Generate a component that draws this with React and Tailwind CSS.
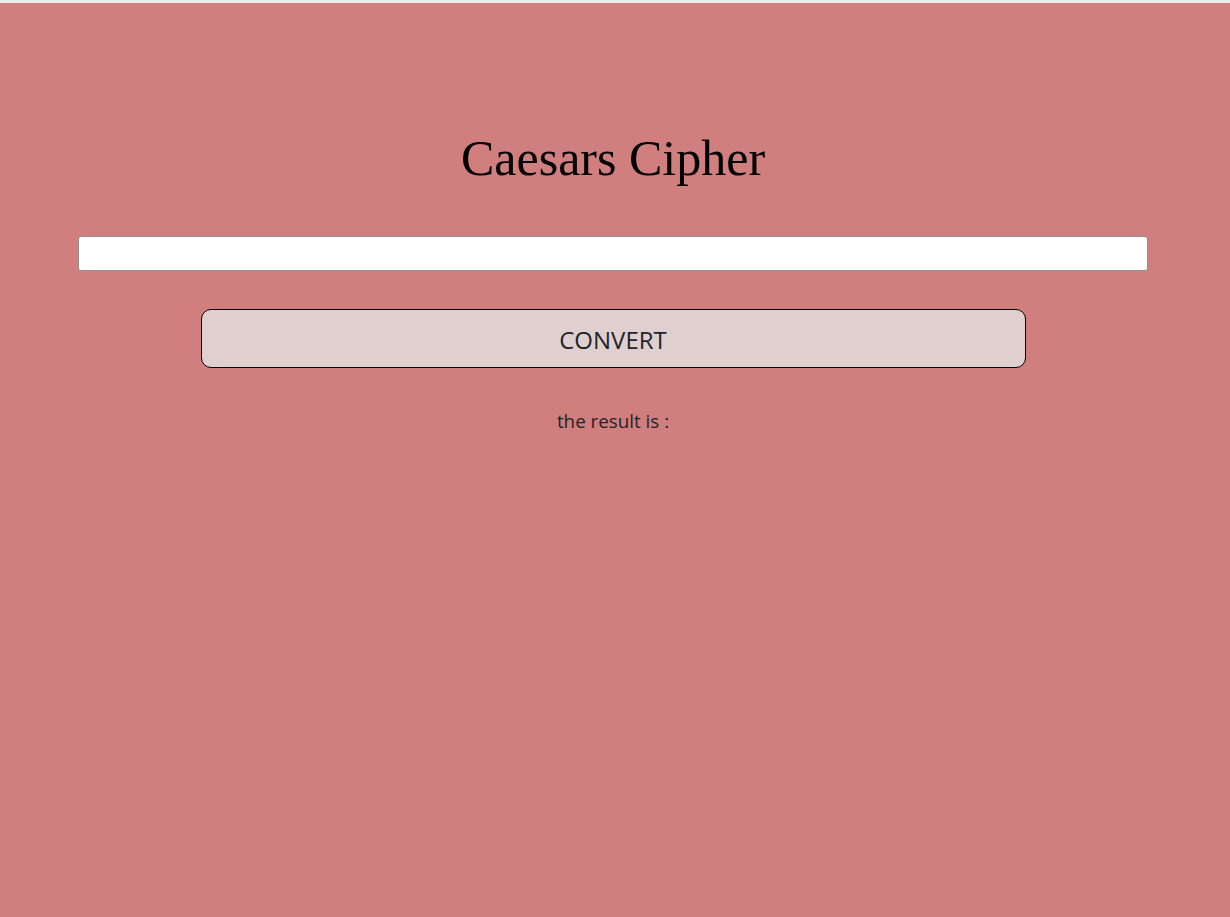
import { useState } from 'react';

// Caesars Cipher page
function App() {
  const [text, setText] = useState('');

  return (
    <div className="min-h-[917px] bg-[#d07e7e] border-t-[3px] border-[#ececec]">
      <div className="w-[1226px] flex flex-col items-center pt-[126px]">
        <h1 className="text-[50px] leading-[58px] text-black" style={{ fontFamily: '"Liberation Serif", serif' }}>
          Caesars Cipher
        </h1>
        <input
          type="text"
          value={text}
          onChange={(e) => setText(e.target.value)}
          className="mt-[49px] w-[1070px] h-[35px] bg-white border border-[#8f8f8f] rounded-[3px] outline-none"
        />
        <button
          className="mt-[38px] w-[825px] h-[59px] pt-[3px] bg-[#dfcfcf] border border-black rounded-[10px] text-[24px] text-[#212529]"
          style={{ fontFamily: '"Open Sans", sans-serif' }}
        >
          CONVERT
        </button>
        <p className="mt-[39px] text-[18.8px] text-[#212529]" style={{ fontFamily: '"Open Sans", sans-serif' }}>
          the result is :
        </p>
      </div>
    </div>
  );
}

export default App;
